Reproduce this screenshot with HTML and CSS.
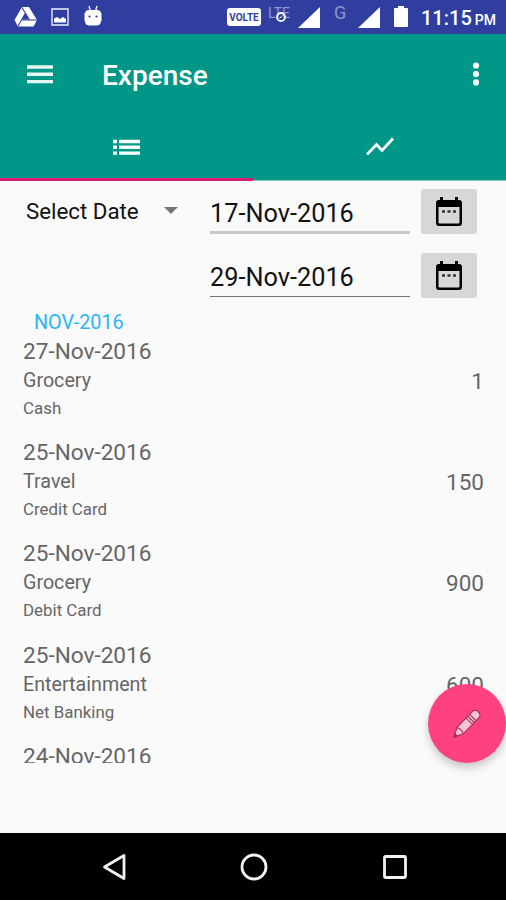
FILE: index.html
```html
<!DOCTYPE html>
<html lang="en">
<head>
  <meta charset="UTF-8">
  <meta name="viewport" content="width=device-width, initial-scale=1.0">
  <title>Expense</title>
  <link rel="stylesheet" href="styles.css">
</head>
<body>
  <div class="statusbar">
    <div class="notifications">
      <svg width="23" height="20" viewBox="0 0 23 20">
        <path d="M8 0h7l8 13-3.500 6.500H4L.5 13z" fill="#fff"/>
        <path d="M11.500 6l3.700 6.500H8z" fill="#303f9f"/>
        <path d="M8 .5l7.500 12.500M11.500 6L4 19M8 13h15" stroke="#303f9f" stroke-width="1.100" fill="none"/>
      </svg>
      <svg width="18" height="18" viewBox="0 0 18 18">
        <path d="M1 1h16v16H1z" fill="none" stroke="#c0c5e6" stroke-width="1.800"/>
        <path d="M3 14.500v-4l3-1.500 3 2 3-2 3 2v3.500z" fill="#fff"/>
      </svg>
      <svg class="droid" width="18" height="20" viewBox="0 0 18 20">
        <path d="M5 0l1.500 5M13 0l-1.500 5" stroke="#fff" stroke-width="1.300"/>
        <path d="M1 8q0-4 4-4h8q4 0 4 4v7q0 4-4 4.500H5Q1 19 1 15z" fill="#fff"/>
        <path d="M0 7v8M18 7v8" stroke="#fff"/>
        <circle cx="5.500" cy="10.500" r="1.100" fill="#303f9f"/>
        <circle cx="12.500" cy="10.500" r="1.100" fill="#303f9f"/>
      </svg>
    </div>
    <div class="system">
      <span class="volte">VOLTE</span>
      <span class="lte">LTE
        <svg class="lte-dot" width="12" height="12" viewBox="0 0 12 12">
          <circle cx="6" cy="6" r="4" fill="none" stroke="#fff" stroke-width="1.800"/>
          <path d="M4.500 7.500l3-3" stroke="#fff"/>
        </svg>
      </span>
      <svg class="signal" width="22" height="21" viewBox="0 0 22 21"><path d="M22 0v21H0z" fill="#fff"/></svg>
      <span class="network">G</span>
      <svg class="signal" width="22" height="21" viewBox="0 0 22 21"><path d="M22 0v21H0z" fill="#fff"/></svg>
      <svg class="battery" width="14" height="21" viewBox="0 0 14 21"><path d="M4 0h6v2h3q1 0 1 1v17q0 1-1 1H1q-1 0-1-1V3q0-1 1-1h3z" fill="#fff"/></svg>
      <span class="clock">11:15<small>PM</small></span>
    </div>
  </div>

  <header>
    <div class="toolbar">
      <svg width="26" height="19" viewBox="0 0 26 19"><path d="M0 2h26M0 9.300h26M0 16.600h26" stroke="#e8f5f3" stroke-width="3.400"/></svg>
      <h1>Expense</h1>
      <svg width="8" height="24" viewBox="0 0 8 24" fill="#fff">
        <circle cx="4" cy="3.500" r="3.100"/>
        <circle cx="4" cy="12" r="3.100"/>
        <circle cx="4" cy="20.400" r="3.100"/>
      </svg>
    </div>
    <nav class="tabs">
      <div class="tab active">
        <svg width="27" height="17" viewBox="0 0 27 17"><path d="M0 2.500h4M6 2.500h21M0 8.300h4M6 8.300h21M0 14.100h4M6 14.100h21" stroke="#fff" stroke-width="3.400"/></svg>
      </div>
      <div class="tab">
        <svg width="30" height="20" viewBox="0 0 30 20"><path d="M2 17.500l9.500-10 5.500 6L28 1.500" fill="none" stroke="#fff" stroke-width="2.800"/></svg>
      </div>
    </nav>
  </header>

  <main>
    <div class="filter">
      <div class="select">Select Date <span class="arrow"></span></div>
      <div class="dates">
        <div class="date-row">
          <div class="date-input first">17-Nov-2016</div>
          <button class="calendar">
            <svg width="26" height="29" viewBox="0 0 26 29">
              <path d="M4 0h3v3h12V0h3v3h1q3 0 3 3v20q0 3-3 3H3q-3 0-3-3V6q0-3 3-3h1z"/>
              <path d="M2.500 10h21v15.500q0 1-1 1h-19q-1 0-1-1z" fill="#d6d7d7"/>
              <path d="M6 14.500h3M11.500 14.500h3M17 14.500h3" stroke="#333" stroke-width="2.600"/>
            </svg>
          </button>
        </div>
        <div class="date-row">
          <div class="date-input">29-Nov-2016</div>
          <button class="calendar">
            <svg width="26" height="29" viewBox="0 0 26 29">
              <path d="M4 0h3v3h12V0h3v3h1q3 0 3 3v20q0 3-3 3H3q-3 0-3-3V6q0-3 3-3h1z"/>
              <path d="M2.500 10h21v15.500q0 1-1 1h-19q-1 0-1-1z" fill="#d6d7d7"/>
              <path d="M6 14.500h3M11.500 14.500h3M17 14.500h3" stroke="#333" stroke-width="2.600"/>
            </svg>
          </button>
        </div>
      </div>
    </div>

    <div class="list">
      <h2>NOV-2016</h2>
      <div class="item">
        <div>
          <div class="day">27-Nov-2016</div>
          <div class="category">Grocery</div>
          <div class="payment">Cash</div>
        </div>
        <div class="amount">1</div>
      </div>
      <div class="item">
        <div>
          <div class="day">25-Nov-2016</div>
          <div class="category">Travel</div>
          <div class="payment">Credit Card</div>
        </div>
        <div class="amount">150</div>
      </div>
      <div class="item">
        <div>
          <div class="day">25-Nov-2016</div>
          <div class="category">Grocery</div>
          <div class="payment">Debit Card</div>
        </div>
        <div class="amount">900</div>
      </div>
      <div class="item">
        <div>
          <div class="day">25-Nov-2016</div>
          <div class="category">Entertainment</div>
          <div class="payment">Net Banking</div>
        </div>
        <div class="amount">600</div>
      </div>
      <div class="item">
        <div>
          <div class="day">24-Nov-2016</div>
        </div>
      </div>
    </div>

    <button class="fab">
      <svg width="30" height="30" viewBox="0 0 30 30">
        <g transform="translate(2 28) rotate(-46)" stroke="#9c2f56" stroke-width="1.100" stroke-linejoin="round">
          <path d="M0 0l9-4.500h22q4 0 4 4.500t-4 4.500H9z" fill="#ffc1d6"/>
          <path d="M9-4.500q2 4.500 0 9M22-4.500v9M24.500-4.500v9M27-4.500v9" fill="none"/>
          <path d="M0 0l3-1.500v3z" fill="#9c2f56"/>
        </g>
      </svg>
    </button>
  </main>

  <footer>
    <svg width="24" height="28" viewBox="0 0 24 28"><path d="M22 2.500v23L2.500 14z" fill="none" stroke="#f2f2f2" stroke-width="2.800" stroke-linejoin="round"/></svg>
    <svg width="28" height="28" viewBox="0 0 28 28"><circle cx="14" cy="14" r="12" fill="none" stroke="#f2f2f2" stroke-width="2.800"/></svg>
    <svg width="26" height="26" viewBox="0 0 26 26"><rect x="2.500" y="2.500" width="21" height="21" rx="1" fill="none" stroke="#f2f2f2" stroke-width="2.800"/></svg>
  </footer>
</body>
</html>
```
FILE: styles.css
```css
* {
  box-sizing: border-box;
}

body {
  font-family: Roboto, sans-serif;
  background-color: #fafafa;
  margin: 0;
  width: 506px;
  height: 900px;
  display: flex;
  flex-direction: column;
  overflow: hidden;
}

svg {
  display: block;
  flex: none;
}

button {
  border: none;
  padding: 0;
  display: flex;
  align-items: center;
  justify-content: center;
}

/* Status bar */
.statusbar {
  height: 34px;
  background-color: #303f9f;
  color: white;
  display: flex;
  justify-content: space-between;
  padding: 0 10px 0 14px;
}

.notifications {
  display: flex;
  align-items: center;
  gap: 14px;
}

.notifications .droid {
  margin: -3px 0 0 1px;
}

.system {
  display: flex;
  align-items: flex-start;
}

.volte {
  width: 34px;
  height: 18px;
  margin-top: 8px;
  border-radius: 3px;
  background-color: white;
  color: #303f9f;
  font-size: 10px;
  font-weight: 700;
  line-height: 19px;
  text-align: center;
}

.lte {
  position: relative;
  width: 24px;
  margin: 5px 6px 0 7px;
  color: #8d96cd;
  font-size: 14px;
  line-height: 16px;
}

.lte-dot {
  position: absolute;
  left: 7px;
  top: 6px;
}

.signal {
  margin-top: 7px;
}

.network {
  width: 38px;
  padding-left: 14px;
  color: #8d96cd;
  font-size: 18px;
  line-height: 26px;
}

.battery {
  margin: 6px 13px 0 14px;
}

.clock {
  width: 75px;
  font-size: 20px;
  font-weight: 500;
  line-height: 37px;
  white-space: nowrap;
}

.clock small {
  margin-left: 3px;
  font-size: 14px;
}

/* App bar */
header {
  height: 147px;
  background-color: #009688;
  border-bottom: 1px solid #82c4bd;
}

.toolbar {
  height: 80px;
  display: flex;
  align-items: center;
  padding: 0 26px 0 27px;
}

.toolbar h1 {
  flex: 1;
  margin: 2px 0 0 49px;
  color: white;
  font-size: 28px;
  font-weight: 500;
}

.tabs {
  display: flex;
  height: 67px;
}

.tab {
  flex: 1;
  display: flex;
  align-items: center;
  justify-content: center;
  padding-top: 2px;
  border-bottom: 3px solid transparent;
}

.tab.active {
  border-bottom-color: #d81b72;
}

/* Date filter */
main {
  position: relative;
  flex: 1;
}

.filter {
  display: flex;
  height: 128px;
  padding: 8px 29px 0 26px;
}

.select {
  display: flex;
  align-items: center;
  justify-content: space-between;
  width: 152px;
  height: 43px;
  color: #111;
  font-size: 22.300px;
}

.arrow {
  border: 7px solid transparent;
  border-top-color: #757575;
  border-bottom: none;
}

.dates {
  display: flex;
  flex-direction: column;
  gap: 19px;
  margin-left: 32px;
}

.date-row {
  display: flex;
  gap: 11px;
}

.date-input {
  width: 200px;
  height: 44px;
  border-bottom: 1px solid #777;
  color: #111;
  font-size: 25.300px;
  line-height: 49px;
}

.date-input.first {
  height: 45px;
  border-bottom: 3px solid #c8c8c8;
}

.calendar {
  width: 56px;
  height: 45px;
  border-radius: 2px;
  background-color: #d6d7d7;
}

/* Expense list */
.list {
  height: 454px;
  padding: 0 22px 0 23px;
  overflow: hidden;
}

.list h2 {
  margin: 0 0 0 11px;
  color: #29b6f6;
  font-size: 19.800px;
  font-weight: 400;
  line-height: 28px;
}

.item {
  display: flex;
  justify-content: space-between;
  height: 101.200px;
  color: #666;
}

.day {
  font-size: 22.600px;
  line-height: 29px;
}

.category {
  font-size: 19.700px;
  line-height: 29px;
}

.payment {
  font-size: 16.900px;
  line-height: 27px;
}

.amount {
  font-size: 22.500px;
  line-height: 88px;
}

.fab {
  position: absolute;
  left: 428px;
  top: 503px;
  width: 78px;
  height: 79px;
  border-radius: 50%;
  background-color: #ff4081;
  box-shadow: 0 5px 8px rgba(0, 0, 0, 0.2);
}

/* Navigation bar */
footer {
  height: 67px;
  background-color: black;
  display: flex;
  align-items: center;
  justify-content: center;
  gap: 114px;
  padding-left: 3px;
}
```
